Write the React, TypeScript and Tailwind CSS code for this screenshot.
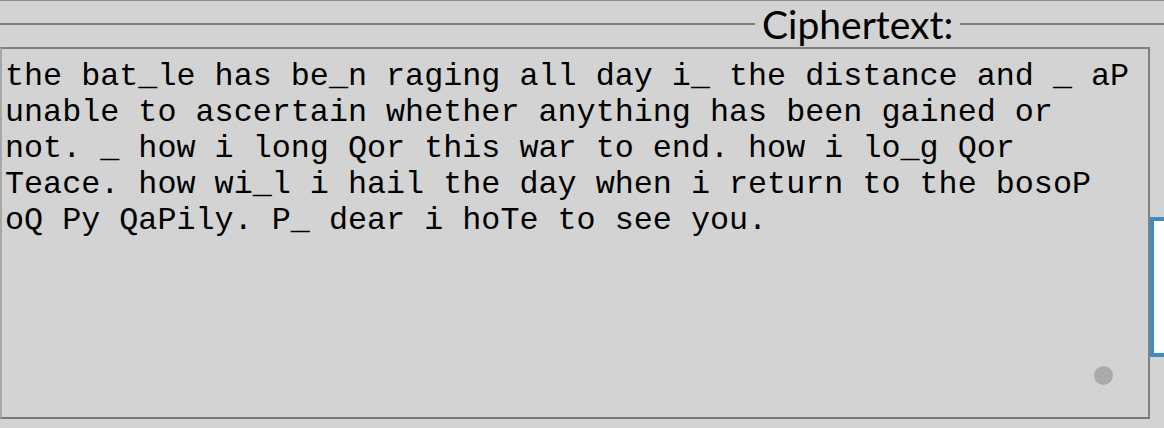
import React from "react";

const lines = [
  "the bat_le has be_n raging all day i_ the distance and _ aP",
  "unable to ascertain whether anything has been gained or",
  "not. _ how i long Qor this war to end. how i lo_g Qor",
  "Teace. how wi_l i hail the day when i return to the bosoP",
  "oQ Py QaPily. P_ dear i hoTe to see you.",
];

export default function App() {
  return (
    <div className="w-[1164px] h-[428px] overflow-hidden bg-[#d3d3d3] border-t border-[#8a8a8a]">
      <div className="flex items-center h-[47px] -mt-[1px]">
        <div className="w-[755px] h-[2px] bg-[#7f7f7f] shrink-0" />
        <div
          className="px-[7px] text-[39px] leading-[40px] text-black shrink-0 mt-[1px]"
          style={{ fontFamily: "Lato, 'Noto Sans', sans-serif" }}
        >
          Ciphertext:
        </div>
        <div className="flex-1 h-[2px] bg-[#7f7f7f]" />
      </div>
      <div className="flex items-start">
        <div className="relative w-[1150px] h-[372px] shrink-0 border-2 border-t-[#808080] border-r-[#808080] border-b-[#787878] border-l-[#a8a8a8] pl-[3px] pt-[10px]">
          <div
            className="text-[31.75px] leading-[36px] text-black"
            style={{ fontFamily: "'Liberation Mono', 'Courier New', monospace" }}
          >
            {lines.map((l, i) => (
              <div key={i} className="whitespace-pre">
                {l}
              </div>
            ))}
          </div>
          <div className="absolute left-[1092px] top-[317px] w-[19px] h-[19px] rounded-full bg-[#ababab]" />
        </div>
        <div className="mt-[170px] w-[40px] h-[140px] bg-white border-[4px] border-r-0 border-[#3f8dc3] shrink-0" />
      </div>
    </div>
  );
}
